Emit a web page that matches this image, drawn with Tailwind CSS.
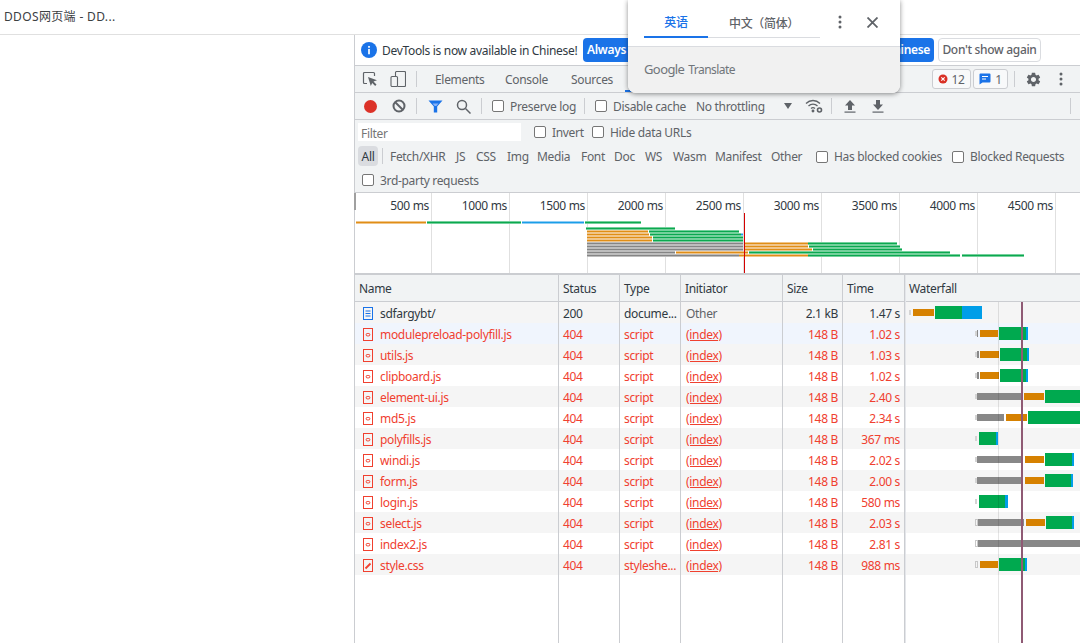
<!DOCTYPE html>
<html lang="en">

<head>
	<meta charset="UTF-8">
	<title>DDOS - DevTools Network</title>
	<script src="https://cdn.jsdelivr.net/npm/@tailwindcss/browser@4"></script>
</head>

<body class="bg-white">
	<div class="relative w-[1080px] h-[643px] overflow-hidden bg-white text-[12px] leading-[16px] tracking-[-0.32px] text-[#5f6368] font-['Noto_Sans','Noto_Sans_CJK_SC',sans-serif]">

		<!-- page title bar -->
		<div class="flex items-center h-[35px] pl-[4px] pb-[1px] border-b border-[#e0e0e0] tracking-[0.35px] text-[#3c4043]">DDOS网页端 - DD...</div>

		<div class="flex h-[608px]">
			<div class="w-[354px]"></div>

			<!-- devtools -->
			<div class="flex flex-col flex-1 border-l border-[#cbcdd1]">

				<!-- infobar -->
				<div class="flex items-center h-[31px] border-b border-[#cbcdd1] pl-[6px]">
					<svg class="w-[16px] h-[16px]" viewBox="0 0 15 15"><circle cx="7.5" cy="7.5" r="7.5" fill="#1a73e8"/><rect x="6.7" y="6.5" width="1.6" height="5" fill="#fff"/><rect x="6.7" y="3.7" width="1.6" height="1.7" fill="#fff"/></svg>
					<span class="ml-[5px] w-[201px] pt-[2px] text-[#303942] whitespace-nowrap">DevTools is now available in Chinese!</span>
					<button class="flex items-center justify-start pl-[4px] h-[24px] w-[176px] bg-[#1a73e8] text-white font-semibold rounded-[4px] whitespace-nowrap">Always match Chrome's</button>
					<button class="flex items-center justify-end pr-[4px] ml-[4px] h-[24px] w-[171px] bg-[#1a73e8] text-white font-semibold rounded-[4px] whitespace-nowrap">Switch DevTools to Chinese</button>
					<button class="flex items-center justify-center ml-[4px] h-[24px] w-[103px] bg-white border border-[#dadce0] font-medium rounded-[4px] whitespace-nowrap">Don't show again</button>
				</div>

				<!-- tabs -->
				<div class="flex items-center h-[27px] bg-[#f1f3f4] border-b border-[#cbcdd1] pl-[1px]">
					<button class="flex items-center justify-center w-[28px] h-[26px]">
						<svg class="w-[16px] h-[16px]" viewBox="0 0 16 16"><path d="M5 12.5H2.5a1 1 0 0 1-1-1V2.500a1 1 0 0 1 1-1h9a1 1 0 0 1 1 1V5" fill="none" stroke="#5f6368" stroke-width="1.2"/><path d="M6 6l9 3.200-3.500 1.400 3 3-1.300 1.300-3-3L8.800 15z" fill="#5f6368"/></svg>
					</button>
					<button class="flex items-center justify-center w-[28px] h-[26px]">
						<svg class="w-[16px] h-[16px]" viewBox="0 0 16 16"><path d="M5.500 5V1.500a1 1 0 0 1 1-1h8a1 1 0 0 1 1 1v13a1 1 0 0 1-1 1H7.500" fill="none" stroke="#5f6368" stroke-width="1.100"/><rect x="1" y="5.500" width="6.500" height="10" rx="1" fill="none" stroke="#5f6368" stroke-width="1.100"/></svg>
					</button>
					<div class="w-px h-[16px] ml-[4px] bg-[#cbcdd1]"></div>
					<div class="flex items-center h-[26px] ml-[18px] pt-[2px]">
						<span class="w-[70px]">Elements</span>
						<span class="w-[66px]">Console</span>
						<span class="w-[54px]">Sources</span>
						<span class="w-[60px] h-[26px] -mt-[2px] border-b-2 border-[#1a73e8]"></span>
					</div>
					<div class="flex items-center ml-auto">
						<span class="flex items-center justify-center gap-[3px] w-[39px] h-[20px] bg-[#f8f9fa] border border-[#cbcdd1] rounded-[3px]">
							<svg class="w-[10px] h-[10px]" viewBox="0 0 10 10"><circle cx="5" cy="5" r="4.500" fill="#d93025"/><path d="M3.300 3.300l3.400 3.400M6.700 3.300L3.300 6.700" stroke="#fff" stroke-width="1.100"/></svg>
							<span class="pt-[1px]">12</span>
						</span>
						<span class="flex items-center justify-center gap-[4px] w-[35px] h-[20px] ml-[2px] bg-[#f8f9fa] border border-[#cbcdd1] rounded-[3px]">
							<svg class="w-[12px] h-[12px]" viewBox="0 0 12 12"><path d="M1.500 0.500h9a1 1 0 0 1 1 1v7a1 1 0 0 1-1 1H3.500L0.500 11.500V1.500a1 1 0 0 1 1-1z" fill="#1a73e8"/><path d="M3 3.500h6M3 6h4" stroke="#fff" stroke-width="1"/></svg>
							<span class="pt-[1px]">1</span>
						</span>
						<div class="w-px h-[16px] ml-[6px] bg-[#cbcdd1]"></div>
						<svg class="w-[17px] h-[17px] ml-[10px]" viewBox="0 0 24 24" fill="#5f6368"><path d="M19.140 12.940c.04-.3.06-.61.06-.94 0-.32-.02-.64-.07-.94l2.030-1.580a.49.49 0 0 0 .12-.61l-1.920-3.320a.488.488 0 0 0-.59-.22l-2.390.96c-.5-.38-1.030-.7-1.620-.94l-.36-2.540a.484.484 0 0 0-.48-.41h-3.840c-.24 0-.43.17-.47.41l-.36 2.540c-.59.24-1.130.57-1.620.94l-2.390-.96c-.22-.08-.47 0-.59.22L2.740 8.870c-.12.21-.08.47.12.61l2.030 1.580c-.05.3-.09.63-.09.94s.02.64.07.94l-2.030 1.580a.49.49 0 0 0-.12.61l1.920 3.320c.12.22.37.29.59.22l2.390-.96c.5.38 1.030.7 1.620.94l.36 2.540c.05.24.24.41.48.41h3.840c.24 0 .44-.17.47-.41l.36-2.540c.59-.24 1.130-.56 1.620-.94l2.390.96c.22.08.47 0 .59-.22l1.920-3.320c.12-.22.07-.47-.12-.61l-2.010-1.580zM12 15.600c-1.980 0-3.600-1.620-3.600-3.600s1.620-3.600 3.600-3.600 3.600 1.620 3.600 3.600-1.620 3.600-3.600 3.600z"/></svg>
						<svg class="w-[4px] h-[14px] ml-[17px] mr-[17px]" viewBox="0 0 4 14" fill="#5f6368"><circle cx="2" cy="2" r="1.500"/><circle cx="2" cy="7" r="1.500"/><circle cx="2" cy="12" r="1.500"/></svg>
					</div>
				</div>

				<!-- network toolbar -->
				<div class="flex items-center h-[27px] bg-[#f1f3f4] border-b border-[#cbcdd1] pl-[1px]">
					<button class="flex items-center justify-center w-[28px] h-[26px]"><span class="w-[13px] h-[13px] rounded-full bg-[#dc3228]"></span></button>
					<button class="flex items-center justify-center w-[29px] h-[26px]">
						<svg class="w-[14px] h-[14px]" viewBox="0 0 14 14" fill="none" stroke="#5f6368" stroke-width="2"><circle cx="7" cy="7" r="5.500"/><path d="M3 3l8 8"/></svg>
					</button>
					<div class="w-px h-[16px] ml-[3px] bg-[#cbcdd1]"></div>
					<svg class="w-[15px] h-[13px] ml-[11px]" viewBox="0 0 15 13"><path d="M0.500 0.500h14L9.200 6.500V12.500H5.800V6.500z" fill="#1a73e8"/><path d="M4.500 3.500h6L8.300 6H6.700z" fill="#8ab4f8"/></svg>
					<svg class="w-[15px] h-[15px] ml-[13px]" viewBox="0 0 15 15" fill="none" stroke="#5f6368" stroke-width="1.500"><circle cx="6" cy="6" r="4.500"/><path d="M9.500 9.500l5 5"/></svg>
					<div class="w-px h-[16px] ml-[10px] bg-[#cbcdd1]"></div>
					<input type="checkbox" class="appearance-none w-[12px] h-[12px] ml-[10px] bg-white border border-[#767676] rounded-[2px]">
					<span class="ml-[6px] w-[74px] pt-[2px] whitespace-nowrap">Preserve log</span>
					<div class="w-px h-[16px] bg-[#cbcdd1]"></div>
					<input type="checkbox" class="appearance-none w-[12px] h-[12px] ml-[10px] bg-white border border-[#767676] rounded-[2px]">
					<span class="ml-[6px] w-[83px] pt-[2px] whitespace-nowrap">Disable cache</span>
					<span class="w-[88px] pt-[2px] whitespace-nowrap">No throttling</span>
					<svg class="w-[8px] h-[6px]" viewBox="0 0 8 6" fill="#5f6368"><path d="M0 0h8L4 6z"/></svg>
					<svg class="w-[18px] h-[14px] ml-[13px]" viewBox="0 0 18 14" fill="none" stroke="#5f6368" stroke-width="1.300"><path d="M1 4.500c4-4 10-4 14 0M3.500 7c2.500-2.500 6.500-2.500 9 0M6 9.500c1.200-1 2.800-1 4 0"/><circle cx="8" cy="12" r="0.800" fill="#5f6368"/><circle cx="14.500" cy="11" r="2" stroke-width="1.600"/></svg>
					<div class="w-px h-[16px] ml-[8px] bg-[#cbcdd1]"></div>
					<svg class="w-[12px] h-[13px] ml-[12px]" viewBox="0 0 12 13" fill="#5f6368"><path d="M6 0l5 5.500H8V10H4V5.500H1z"/><rect x="0.500" y="11.500" width="11" height="1.200"/></svg>
					<svg class="w-[12px] h-[13px] ml-[16px]" viewBox="0 0 12 13" fill="#5f6368"><path d="M6 10L1 4.500h3V0h4v4.500h3z"/><rect x="0.500" y="11.500" width="11" height="1.200"/></svg>
					<div class="w-px h-[16px] ml-[186px] bg-[#cbcdd1]"></div>
				</div>

				<!-- filter bar -->
				<div class="flex flex-col h-[73px] bg-[#f1f3f4] border-b border-[#cbcdd1]">
					<div class="flex items-center h-[24px] pl-[3px]">
						<div class="flex items-center self-start w-[163px] h-[18px] mt-[3px] pl-[3px] pt-[3px] bg-white text-[#757575]">Filter</div>
						<input type="checkbox" class="appearance-none w-[12px] h-[12px] ml-[13px] bg-white border border-[#767676] rounded-[2px]">
						<span class="ml-[6px] w-[40px] pt-[1px]">Invert</span>
						<input type="checkbox" class="appearance-none w-[12px] h-[12px] bg-white border border-[#767676] rounded-[2px]">
						<span class="ml-[6px] pt-[1px] whitespace-nowrap">Hide data URLs</span>
					</div>
					<div class="flex items-center h-[24px] pl-[3px] whitespace-nowrap">
						<span class="flex items-center justify-center w-[20px] h-[20px] pt-[1px] bg-[#dadce0] rounded-[4px] text-[#303942]">All</span>
						<div class="w-px h-[16px] ml-[4px] bg-[#cbcdd1]"></div>
						<div class="flex items-center ml-[7px] pt-[1px]">
							<span class="w-[66px]">Fetch/XHR</span>
							<span class="w-[20px]">JS</span>
							<span class="w-[31px]">CSS</span>
							<span class="w-[30px]">Img</span>
							<span class="w-[44px]">Media</span>
							<span class="w-[33px]">Font</span>
							<span class="w-[31px]">Doc</span>
							<span class="w-[28px]">WS</span>
							<span class="w-[42px]">Wasm</span>
							<span class="w-[56px]">Manifest</span>
							<span class="w-[45px]">Other</span>
						</div>
						<input type="checkbox" class="appearance-none w-[12px] h-[12px] mt-[2px] bg-white border border-[#767676] rounded-[2px]">
						<span class="ml-[6px] w-[118px] pt-[1px]">Has blocked cookies</span>
						<input type="checkbox" class="appearance-none w-[12px] h-[12px] mt-[2px] bg-white border border-[#767676] rounded-[2px]">
						<span class="ml-[6px] pt-[1px]">Blocked Requests</span>
					</div>
					<div class="flex items-center h-[24px] pl-[7px]">
						<input type="checkbox" class="appearance-none w-[12px] h-[12px] bg-white border border-[#767676] rounded-[2px]">
						<span class="ml-[6px] pt-[2px]">3rd-party requests</span>
					</div>
				</div>

				<!-- overview: bars and ticks sit on a time axis -->
				<div id="overview" class="relative h-[82px] bg-white border-b-2 border-[#cbcdd1] shrink-0">
					<div class="absolute -left-px top-0 w-[2px] h-[17px] bg-[#a0a0a0]"></div>
				</div>

				<!-- table header -->
				<div class="grid grid-cols-[204px_61px_61px_102px_60px_62px_1fr] h-[27px] bg-[#f1f3f4] border-b border-[#cbcdd1] text-[#303942] shrink-0">
					<div class="flex items-center pl-[4px] pt-[2px]">Name</div>
					<div class="flex items-center pl-[4px] pt-[2px]">Status</div>
					<div class="flex items-center pl-[4px] pt-[2px]">Type</div>
					<div class="flex items-center pl-[4px] pt-[2px]">Initiator</div>
					<div class="flex items-center pl-[4px] pt-[2px]">Size</div>
					<div class="flex items-center pl-[4px] pt-[2px]">Time</div>
					<div class="flex items-center pl-[4px] pt-[2px]">Waterfall</div>
				</div>

				<!-- table body -->
				<div id="rows" class="relative flex-1 min-h-0">
					<div class="absolute -top-[27px] bottom-0 left-0 right-0 grid grid-cols-[204px_61px_61px_102px_60px_62px_1fr] pointer-events-none z-30">
						<div class="border-r border-[#cbcdd1]"></div>
						<div class="border-r border-[#cbcdd1]"></div>
						<div class="border-r border-[#cbcdd1]"></div>
						<div class="border-r border-[#cbcdd1]"></div>
						<div class="border-r border-[#cbcdd1]"></div>
						<div class="border-r border-[#cbcdd1]"></div>
						<div class="border-l border-[#e4e6ea]"></div>
					</div>
					<div class="absolute top-0 bottom-0 left-[643px] w-px bg-black/10 z-30"></div>
					<div id="bars" class="absolute inset-0 z-20"></div>
					<div class="absolute top-0 bottom-0 left-[666px] w-[2px] bg-[#8f5a74] z-30"></div>
				</div>
			</div>
		</div>

		<!-- translate popup -->
		<div class="absolute left-[628px] top-0 z-40 w-[272px] h-[93px] bg-white rounded-b-[8px] shadow-[0_1px_5px_rgba(0,0,0,0.45)] overflow-hidden">
			<div class="flex items-start h-[47px] border-b border-[#dadce0] pl-[16px]">
				<div class="flex w-[176px] h-[38px] border-b border-[#dadce0]">
					<div class="flex items-center justify-center w-[64px] h-[38px] border-b-2 border-[#1a73e8] text-[#1a73e8] font-medium pt-[9px]">英语</div>
					<div class="flex items-center justify-center w-[112px] h-[38px] font-medium pt-[9px] text-[#5f6368]">中文（简体）</div>
				</div>
				<svg class="w-[4px] h-[14px] mt-[15px] ml-[18px]" viewBox="0 0 4 14" fill="#5f6368"><circle cx="2" cy="2" r="1.500"/><circle cx="2" cy="7" r="1.500"/><circle cx="2" cy="12" r="1.500"/></svg>
				<svg class="w-[11px] h-[11px] mt-[17px] ml-[25px]" viewBox="0 0 11 11" stroke="#5f6368" stroke-width="1.800"><path d="M0.500 0.500l10 10M10.500 0.500l-10 10"/></svg>
			</div>
			<div class="flex items-baseline h-[46px] pl-[16px] pt-[14px] bg-[#f1f1f1] text-[#70757a]">
				<span class="text-[13px] tracking-[-0.6px]">Google</span>
				<span class="ml-[4px] text-[12px] tracking-[-0.55px]">Translate</span>
			</div>
		</div>
	</div>

	<script>
		var ticks = [
			['500 ms', 76], ['1000 ms', 154], ['1500 ms', 232], ['2000 ms', 310], ['2500 ms', 388],
			['3000 ms', 466], ['3500 ms', 544], ['4000 ms', 622], ['4500 ms', 700]
		];

		// [colour, top, left, right] in page coordinates
		var spans = [
			['o', 221, 356, 426], ['g', 221, 427, 521], ['b', 221, 522, 584], ['g', 221, 585, 641],
			['g', 227, 586, 675],
			['o', 230, 587, 648], ['g', 230, 649, 739],
			['o', 233, 587, 649], ['g', 233, 650, 741], ['b', 233, 741, 743],
			['o', 236, 587, 652], ['g', 236, 653, 743],
			['o', 239, 587, 652], ['g', 239, 653, 743],
			['k', 242, 587, 743], ['o', 242, 745, 808], ['g', 242, 808, 897],
			['k', 245, 587, 743], ['o', 245, 745, 808], ['g', 245, 809, 900],
			['k', 248, 587, 743], ['o', 248, 745, 812], ['g', 248, 813, 902],
			['k', 251, 587, 675], ['o', 251, 676, 748], ['g', 251, 749, 950],
			['k', 254, 587, 739], ['o', 254, 739, 808], ['g', 254, 808, 960], ['g', 254, 962, 1024]
		];

		var spanClass = {
			o: 'absolute h-[3px] bg-[#e08e16] border-y border-[#f0c58a]',
			g: 'absolute h-[3px] bg-[#0ba84f] border-y border-[#74d09c]',
			b: 'absolute h-[3px] bg-[#1a9fe8] border-y border-[#90cdf5]',
			k: 'absolute h-[3px] bg-[#858585] border-y border-[#bdbdbd]'
		};

		var overview = document.getElementById('overview');
		var html = '';
		ticks.forEach(function (t) {
			html += '<div class="absolute top-0 h-[80px] w-px bg-[#e0e0e0]" style="left:' + t[1] + 'px"></div>';
			html += '<div class="absolute top-[5px] text-right w-[70px] text-[#303942]" style="left:' + (t[1] - 72) + 'px">' + t[0] + '</div>';
		});
		spans.forEach(function (s) {
			html += '<div class="' + spanClass[s[0]] + '" style="left:' + (s[2] - 355) + 'px;top:' + (s[1] - 193) + 'px;width:' + (s[3] - s[2]) + 'px"></div>';
		});
		html += '<div class="absolute left-[389px] top-[20px] h-[60px] w-px bg-[#d40000]"></div>';
		overview.insertAdjacentHTML('beforeend', html);

		// name, status, type, size, time, icon, row background, waterfall segments
		var requests = [
			['sdfargybt/', '200', 'docume...', '2.1 kB', '1.47 s', 'doc', 'bg-[#f5f5f5]', [['l', 909, 911], ['o', 913, 934], ['g', 935, 962], ['b', 962, 982]]],
			['modulepreload-polyfill.js', '404', 'script', '148 B', '1.02 s', 'js', 'bg-[#f0f5fd]', [['l', 975, 977], ['k', 977, 978], ['o', 980, 998], ['g', 999, 1026], ['b', 1026, 1028]]],
			['utils.js', '404', 'script', '148 B', '1.03 s', 'js', 'bg-[#f5f5f5]', [['l', 975, 977], ['k', 977, 979], ['o', 980, 999], ['g', 1000, 1027], ['b', 1027, 1029]]],
			['clipboard.js', '404', 'script', '148 B', '1.02 s', 'js', 'bg-white', [['l', 975, 977], ['k', 977, 979], ['o', 980, 999], ['g', 1000, 1026], ['b', 1026, 1028]]],
			['element-ui.js', '404', 'script', '148 B', '2.40 s', 'js', 'bg-[#f5f5f5]', [['l', 975, 977], ['k', 977, 1023], ['o', 1024, 1044], ['g', 1045, 1080]]],
			['md5.js', '404', 'script', '148 B', '2.34 s', 'js', 'bg-white', [['l', 975, 977], ['k', 977, 1004], ['o', 1006, 1027], ['g', 1028, 1080]]],
			['polyfills.js', '404', 'script', '148 B', '367 ms', 'js', 'bg-[#f5f5f5]', [['l', 975, 977], ['g', 979, 996], ['b', 996, 998]]],
			['windi.js', '404', 'script', '148 B', '2.02 s', 'js', 'bg-white', [['l', 975, 977], ['k', 977, 1023], ['o', 1025, 1044], ['g', 1045, 1072], ['b', 1072, 1074]]],
			['form.js', '404', 'script', '148 B', '2.00 s', 'js', 'bg-[#f5f5f5]', [['l', 975, 977], ['k', 977, 1023], ['o', 1025, 1044], ['g', 1045, 1071], ['b', 1071, 1073]]],
			['login.js', '404', 'script', '148 B', '580 ms', 'js', 'bg-white', [['l', 975, 977], ['g', 979, 1005], ['b', 1005, 1008]]],
			['select.js', '404', 'script', '148 B', '2.03 s', 'js', 'bg-[#f5f5f5]', [['r', 975, 978], ['k', 978, 1024], ['o', 1026, 1045], ['g', 1046, 1072], ['b', 1072, 1074]]],
			['index2.js', '404', 'script', '148 B', '2.81 s', 'js', 'bg-white', [['r', 975, 978], ['k', 978, 1080]]],
			['style.css', '404', 'styleshe...', '148 B', '988 ms', 'css', 'bg-[#f5f5f5]', [['r', 975, 978], ['o', 980, 998], ['g', 999, 1025], ['b', 1025, 1027]]]
		];

		var icons = {
			doc: '<svg class="w-[10px] h-[13px] mt-[1px]" viewBox="0 0 10 13" fill="none" stroke="#1a73e8"><rect x="0.500" y="0.500" width="9" height="12"/><path d="M2.500 4h5M2.500 6.500h5M2.500 9h5"/></svg>',
			js: '<svg class="w-[10px] h-[13px] mt-[1px]" viewBox="0 0 10 13" fill="none" stroke="#f0402f"><rect x="0.500" y="0.500" width="9" height="12"/><rect x="3.200" y="5.500" width="3.600" height="2.400" rx="1"/></svg>',
			css: '<svg class="w-[10px] h-[13px] mt-[1px]" viewBox="0 0 10 13" fill="none" stroke="#f0402f"><rect x="0.500" y="0.500" width="9" height="12"/><path d="M2.500 9.500l5-5" stroke-width="1.800"/></svg>'
		};

		var segClass = {
			l: 'absolute top-[8px] h-[5px] bg-[#d4d4d4]',
			r: 'absolute top-[7px] h-[7px] border border-[#c8c8c8]',
			k: 'absolute top-[7px] h-[7px] bg-[#888888]',
			o: 'absolute top-[7px] h-[7px] bg-[#d68100]',
			g: 'absolute top-[4px] h-[13px] bg-[#00a94f]',
			b: 'absolute top-[4px] h-[13px] bg-[#009ee8]'
		};

		var rows = '';
		requests.forEach(function (r) {
			var failed = r[1] !== '200';
			var text = failed ? 'text-[#f0402f]' : 'text-[#303942]';
			var initiator = failed
				? '<span class="underline">(index)</span>'
				: '<span class="text-[#5f6368]">Other</span>';
			var bars = '';
			r[7].forEach(function (s) {
				bars += '<div class="' + segClass[s[0]] + '" style="left:' + (s[1] - 355 - 550) + 'px;width:' + (s[2] - s[1]) + 'px"></div>';
			});
			rows += '<div class="grid grid-cols-[204px_61px_61px_102px_60px_62px_1fr] h-[21px] items-center whitespace-nowrap ' + r[6] + ' ' + text + '">'
				+ '<div class="flex items-center pl-[8px] gap-[7px]">' + icons[r[5]] + '<span class="pt-[2px]">' + r[0] + '</span></div>'
				+ '<div class="pl-[4px] pt-[2px]">' + r[1] + '</div>'
				+ '<div class="pl-[4px] pt-[2px]">' + r[2] + '</div>'
				+ '<div class="pl-[5px] pt-[2px]">' + initiator + '</div>'
				+ '<div class="text-right pr-[5px] pt-[2px]">' + r[3] + '</div>'
				+ '<div class="text-right pr-[5px] pt-[2px]">' + r[4] + '</div>'
				+ '<div class="relative h-[21px] overflow-hidden">' + bars + '</div>'
				+ '</div>';
		});
		document.getElementById('bars').innerHTML = rows;
	</script>
</body>

</html>
